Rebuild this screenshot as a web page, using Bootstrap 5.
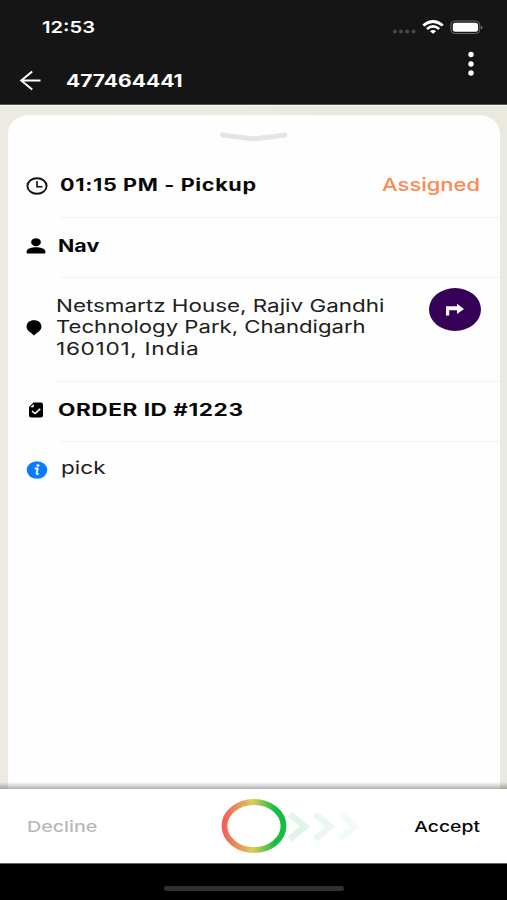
<!DOCTYPE html>
<html lang="en">
<head>
<meta charset="utf-8">
<meta name="viewport" content="width=device-width, initial-scale=1">
<title>Order 477464441</title>
<link href="https://cdn.jsdelivr.net/npm/bootstrap@5.3.0/dist/css/bootstrap.min.css" rel="stylesheet">
<style>
body{font-family:Inter,"Liberation Sans",sans-serif;background:#000;color:#111}
.screen{width:507px;height:900px}
.topbar{height:105px;background:#151515;color:#fff;border-bottom:1px solid #55544f}
.status{height:54px;padding:0 24px 0 42px}
.titlebar{height:50px;padding:3px 31px 0 20px}
.more{margin-bottom:43px}
.stage{height:684px;background:linear-gradient(90deg,#edeae2,#e9e9df);padding:9px 7px 0 8px;border-top:1px solid #faf9f5;position:relative}
.stage::after{content:"";position:absolute;left:0;right:0;bottom:0;height:7px;background:linear-gradient(rgba(0,0,0,0),rgba(0,0,0,.3))}
.sheet{background:#fefefe;border-radius:22px 22px 0 0/18px 18px 0 0}
.handle{height:38px;padding-top:16px}
.entry{height:60px;padding-left:18px}
.entry-time{height:65px}
.entry-address{height:104px}
.entry .icon-slot{width:34px;flex:none;padding-bottom:5px}
.entry-time .icon-slot{padding-bottom:0}
.entry-address .icon-slot{width:30px}
.entry .entry-body{border-bottom:1px solid #f3f3f3;height:100%;padding-bottom:3px}
.entry-time .entry-body{padding-bottom:0}
.fit{display:inline-block;white-space:nowrap;transform-origin:0 50%;transform:scaleX(var(--sx,1.2));line-height:22px}
.fit-end{transform-origin:100% 50%}
.time{--sx:1.22;font-size:16.5px;font-weight:600}
.number{--sx:1.237;font-size:17px;font-weight:700}
.heading{font-weight:700;font-size:17px;color:#080808}
.outdent{margin-left:-2px}
.plain{font-weight:400;font-size:17.5px;color:#202020}
.assigned{--sx:1.255;font-weight:500;font-size:17.5px;color:#fb8951}
.address{padding-top:17px}
.address .fit{line-height:21.4px;display:block;width:max-content}
.s-pickup{--sx:1.27;letter-spacing:.5px}
.s-nav{--sx:1.26}
.s-line1{--sx:1.28}
.s-line2{--sx:1.264}
.s-line3{--sx:1.29;letter-spacing:.55px}
.s-order{--sx:1.33;letter-spacing:.4px}
.s-pick{--sx:1.29;margin-left:1px}
.s-decline{--sx:1.31;color:#b8b8b8}
.s-accept{--sx:1.29;color:#080808}
.route{width:52px;height:43px;background:#360058;border-radius:50%;border:0;margin:10px 3px 0 0}
.actions{height:75px;background:#fff;border-bottom:1px solid #666;padding:2px 27px 0 27px}
.slot{width:145px;padding-bottom:2px}
.action{font-size:15px;font-weight:500}
.slider{margin-top:-2px}
.homebar{height:36px;padding-top:22px}
.homebar div{width:180px;height:5px;border-radius:3px;background:#303030}
svg{display:block;flex:none}
</style>
</head>
<body>
<main class="screen d-flex flex-column overflow-hidden">
  <header class="topbar">
    <div class="status d-flex align-items-center justify-content-between">
      <span class="fit time">12:53</span>
      <svg width="91" height="20" viewBox="0 0 91 20">
        <g fill="#484848"><circle cx="3" cy="14.500" r="2"/><circle cx="9" cy="14.500" r="2"/><circle cx="15.200" cy="14.500" r="2"/><circle cx="21.500" cy="14.500" r="2"/></g>
        <g fill="none" stroke="#fff" stroke-width="2.700"><path d="M31.300 8.500Q41 .5 50.800 8.500"/><path d="M35 12Q41 6.800 47.200 12"/></g>
        <path d="M38 14.200Q41 11.800 44.100 14.200L41 16.700Z" fill="#fff"/>
        <rect x="58.800" y="4" width="29" height="12.500" rx="4" fill="none" stroke="#686868"/>
        <rect x="60.800" y="5.800" width="25.300" height="9" rx="2.500" fill="#fff"/>
        <path d="M89 8.500q3 2 0 4z" fill="#777"/>
      </svg>
    </div>
    <div class="titlebar d-flex align-items-center">
      <svg width="22" height="22" viewBox="0 0 22 22" fill="none" stroke="#fff" stroke-width="2"><path d="M20.500 10.500H1.500M12.200 1.500L1.200 10.500L12.200 19.500"/></svg>
      <span class="fit number ms-4">477464441</span>
      <svg class="more ms-auto" width="10" height="34" viewBox="0 0 10 34" fill="#fff"><circle cx="5" cy="12.500" r="2.700"/><circle cx="5" cy="22" r="2.700"/><circle cx="5" cy="31" r="2.700"/></svg>
    </div>
  </header>
  <section class="stage">
    <div class="sheet h-100">
      <div class="handle d-flex justify-content-center">
        <svg width="70" height="12" viewBox="0 0 70 12" fill="none" stroke="#e5e5e5" stroke-width="5" stroke-linecap="round" stroke-linejoin="round"><path d="M3.500 4L29 7.300Q35 8.200 41 7.300L66 4"/></svg>
      </div>
      <div class="entry entry-time d-flex align-items-center">
        <div class="icon-slot"><svg width="22" height="18" viewBox="0 0 22 18" fill="none" stroke="#111" stroke-width="1.900"><ellipse cx="11" cy="9" rx="9.600" ry="7.800"/><path d="M11 4V9.700H16.500" stroke-width="1.600"/></svg></div>
        <div class="entry-body flex-grow-1 d-flex align-items-center justify-content-between pe-3">
          <span class="fit heading s-pickup">01:15 PM - Pickup</span>
          <span class="fit fit-end assigned me-1">Assigned</span>
        </div>
      </div>
      <div class="entry d-flex align-items-center">
        <div class="icon-slot"><svg width="20" height="16" viewBox="0 0 20 16"><ellipse cx="10" cy="4.200" rx="4.800" ry="4"/><path d="M.7 15.500V13.200C.7 10.500 6 9.300 10 9.300S19.300 10.500 19.300 13.200V15.500Z"/></svg></div>
        <div class="entry-body flex-grow-1 d-flex align-items-center"><span class="fit heading outdent s-nav">Nav</span></div>
      </div>
      <div class="entry entry-address d-flex align-items-center">
        <div class="icon-slot"><svg width="16" height="16" viewBox="0 0 16 16"><path d="M8 .3C12.500.3 15.500 3 15.500 6.800C15.500 9.300 13.500 11.500 10.500 13.300L8 15.500L5.500 13.300C2.500 11.500.5 9.300.5 6.800C.5 3 3.500.3 8 .3Z"/></svg></div>
        <div class="entry-body flex-grow-1 d-flex justify-content-between pe-3">
          <address class="address plain mb-0">
            <span class="fit s-line1">Netsmartz House, Rajiv Gandhi</span>
            <span class="fit s-line2">Technology Park, Chandigarh</span>
            <span class="fit s-line3">160101, India</span>
          </address>
          <button class="route p-0 d-flex align-items-center justify-content-center flex-shrink-0" aria-label="Directions">
            <svg width="20" height="14" viewBox="0 0 20 14"><path d="M1 12.500V3.300H12V.8L19 6L12 11V7.300H4.200V12.500Z" fill="#fff"/></svg>
          </button>
        </div>
      </div>
      <div class="entry d-flex align-items-center">
        <div class="icon-slot"><svg width="18" height="16" viewBox="-2.500 0 18 16"><path d="M5 .5H12.500Q14.500.5 14.500 2.500V13.500Q14.500 15.500 12.500 15.500H2.500Q.5 15.500.5 13.500V5Z"/><path d="M1.800 5.300L5.200 2V5.300Z" fill="#fff"/><path d="M3.500 9L6.500 11.500L11.700 6.800" fill="none" stroke="#fff" stroke-width="1.600"/></svg></div>
        <div class="entry-body flex-grow-1 d-flex align-items-center"><span class="fit heading outdent s-order">ORDER ID #1223</span></div>
      </div>
      <div class="entry d-flex align-items-center">
        <div class="icon-slot pb-1"><svg width="22" height="18" viewBox="0 0 22 18"><ellipse cx="11" cy="9" rx="10.300" ry="8.700" fill="#087cff"/><path d="M8.800 7.500H11.700L10.500 12.800H12.800" fill="none" stroke="#fff" stroke-width="1.800" stroke-linejoin="round"/><ellipse cx="12" cy="4.500" rx="1.500" ry="1.200" fill="#fff"/></svg></div>
        <div class="pb-2"><span class="fit plain s-pick">pick</span></div>
      </div>
    </div>
  </section>
  <footer>
    <div class="actions d-flex align-items-center justify-content-between">
      <div class="slot"><span class="fit action s-decline">Decline</span></div>
      <svg class="slider me-auto ms-5" width="144" height="58" viewBox="0 0 144 58" fill="none">
        <defs><linearGradient id="ring"><stop stop-color="#f1625b"/><stop offset=".48" stop-color="#ddcd55"/><stop offset=".85" stop-color="#16bd43"/></linearGradient></defs>
        <g stroke-width="6.500"><path d="M70 17L85 29.500L70 42" stroke="#dff5e9"/><path d="M95 17L110 29.500L95 42" stroke="#e9f8f0"/><path d="M120 17L135 29.500L120 42" stroke="#f2fbf6"/></g>
        <ellipse cx="34" cy="29" rx="29.500" ry="24" stroke="url(#ring)" stroke-width="5.800"/>
      </svg>
      <span class="fit fit-end action s-accept">Accept</span>
    </div>
    <div class="homebar d-flex justify-content-center"><div></div></div>
  </footer>
</main>
<script src="https://cdn.jsdelivr.net/npm/bootstrap@5.3.0/dist/js/bootstrap.bundle.min.js"></script>
</body>
</html>
